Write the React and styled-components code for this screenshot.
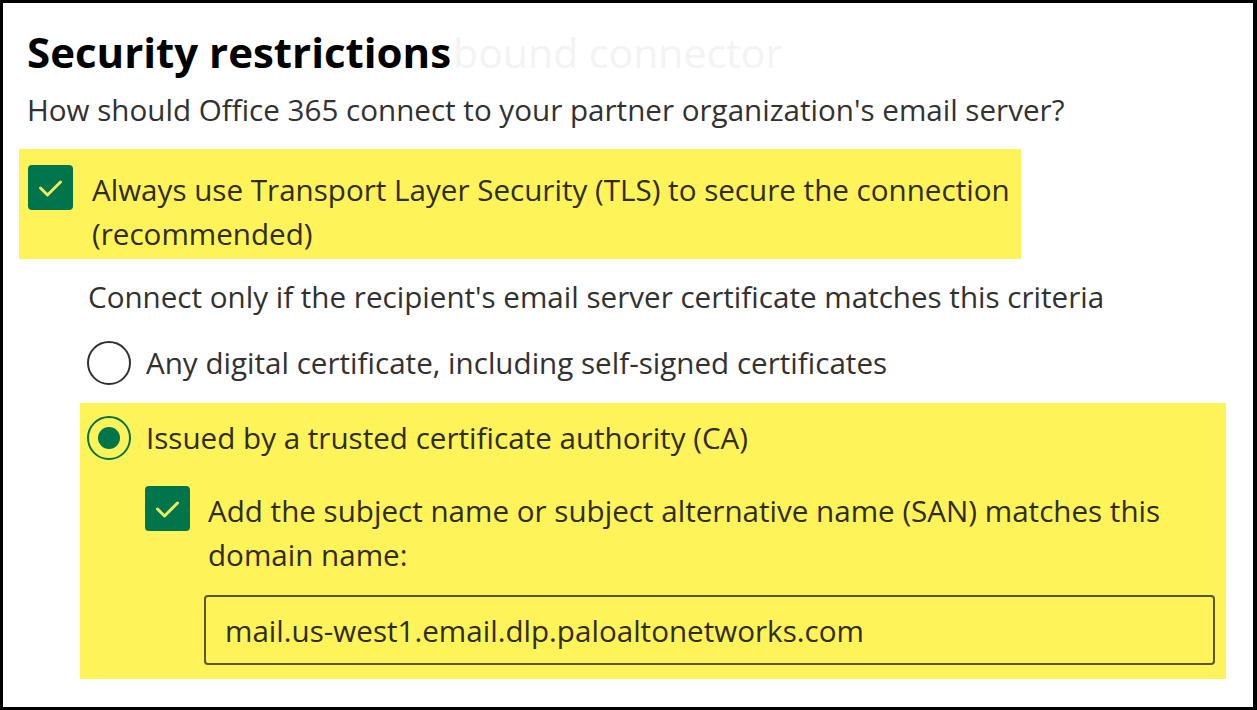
import React from 'react'
import styled, { createGlobalStyle } from 'styled-components'

const GlobalStyle = createGlobalStyle`
  html, body {
    margin: 0;
    padding: 0;
    background: #fff;
  }
  body {
    font-family: "Open Sans", "Noto Sans", sans-serif;
  }
`

const Frame = styled.div`
  box-sizing: border-box;
  width: 1257px;
  height: 710px;
  border-style: solid;
  border-color: #000;
  border-width: 3px 4px 3px 3px;
  padding: 25px 0 0 24px;
  background: #fff;
  overflow: hidden;
  color: #323130;
`

const TitleRow = styled.div`
  display: flex;
  align-items: baseline;
  height: 48px;
  white-space: nowrap;
`

const Title = styled.h1`
  margin: 0;
  font-size: 42px;
  line-height: 48px;
  font-weight: 700;
  color: #000;
`

const Ghost = styled.span`
  font-size: 41px;
  line-height: 48px;
  font-weight: 400;
  color: #f3f3f3;
  margin-left: 2px;
`

const Subtitle = styled.p`
  margin: 14px 0 0;
  font-size: 29.6px;
  line-height: 40px;
`

const Highlight = styled.div`
  box-sizing: border-box;
  background: #fff35a;
  color: #2f2d14;
  margin-left: ${(p) => p.$offset}px;
  margin-top: ${(p) => p.$top}px;
  width: ${(p) => p.$width}px;
  padding: ${(p) => p.$pad};
`

const CheckRow = styled.div`
  display: flex;
  align-items: flex-start;
  gap: ${(p) => p.$gap}px;
`

const Box = styled.span`
  flex: none;
  width: 45px;
  height: 45px;
  margin-top: -3px;
  border-radius: 4px;
  background: #00744a;
  display: flex;
  align-items: center;
  justify-content: center;
`

const Label = styled.div`
  font-size: 29.6px;
  line-height: 44px;
`

const Criteria = styled.div`
  margin-left: 60px;
`

const Caption = styled.p`
  margin: 18px 0 0 1px;
  font-size: 29.6px;
  line-height: 40px;
`

const RadioRow = styled.div`
  display: flex;
  align-items: center;
  gap: 15px;
  height: 44px;
  margin-top: ${(p) => p.$top}px;
`

const Radio = styled.span`
  box-sizing: border-box;
  flex: none;
  width: 44px;
  height: 44px;
  border-radius: 50%;
  border: 2px solid ${(p) => (p.$checked ? '#00744a' : '#323130')};
  display: flex;
  align-items: center;
  justify-content: center;

  &::after {
    content: '';
    display: ${(p) => (p.$checked ? 'block' : 'none')};
    width: 22px;
    height: 22px;
    border-radius: 50%;
    background: #00744a;
  }
`

const Nested = styled.div`
  margin: 29px 0 0 58px;
`

const Field = styled.div`
  box-sizing: border-box;
  margin: 18px 0 0 59px;
  width: 1011px;
  height: 70px;
  border: 2px solid #5b5627;
  border-radius: 4px;
  padding-left: 19px;
  display: flex;
  align-items: center;
  font-size: 29.6px;
  color: #2f2d14;
`

const Check = () => (
  <svg width="45" height="45" viewBox="0 0 45 45" fill="none">
    <path d="M12.5 23 L19.5 30 L32.5 17" stroke="#eeec5e" strokeWidth="3" strokeLinecap="round" strokeLinejoin="round" />
  </svg>
)

const App = () => {
  return (
    <Frame>
      <GlobalStyle />
      <TitleRow>
        <Title>Security restrictions</Title>
        <Ghost>bound connector</Ghost>
      </TitleRow>
      <Subtitle>How should Office 365 connect to your partner organization's email server?</Subtitle>

      <Highlight $offset={-8} $top={19} $width={1002} $pad="19px 0 3px 9px">
        <CheckRow $gap={19}>
          <Box><Check /></Box>
          <Label>
            Always use Transport Layer Security (TLS) to secure the connection
            <br />
            (recommended)
          </Label>
        </CheckRow>
      </Highlight>

      <Criteria>
        <Caption>Connect only if the recipient's email server certificate matches this criteria</Caption>
        <RadioRow $top={24}>
          <Radio />
          <Label>Any digital certificate, including self-signed certificates</Label>
        </RadioRow>

        <Highlight $offset={-7} $top={18} $width={1146} $pad="13px 0 14px 7px">
          <RadioRow $top={0}>
            <Radio $checked />
            <Label>Issued by a trusted certificate authority (CA)</Label>
          </RadioRow>
          <Nested>
            <CheckRow $gap={18}>
              <Box><Check /></Box>
              <Label>
                Add the subject name or subject alternative name (SAN) matches this
                <br />
                domain name:
              </Label>
            </CheckRow>
            <Field>mail.us-west1.email.dlp.paloaltonetworks.com</Field>
          </Nested>
        </Highlight>
      </Criteria>
    </Frame>
  )
}

export default App
